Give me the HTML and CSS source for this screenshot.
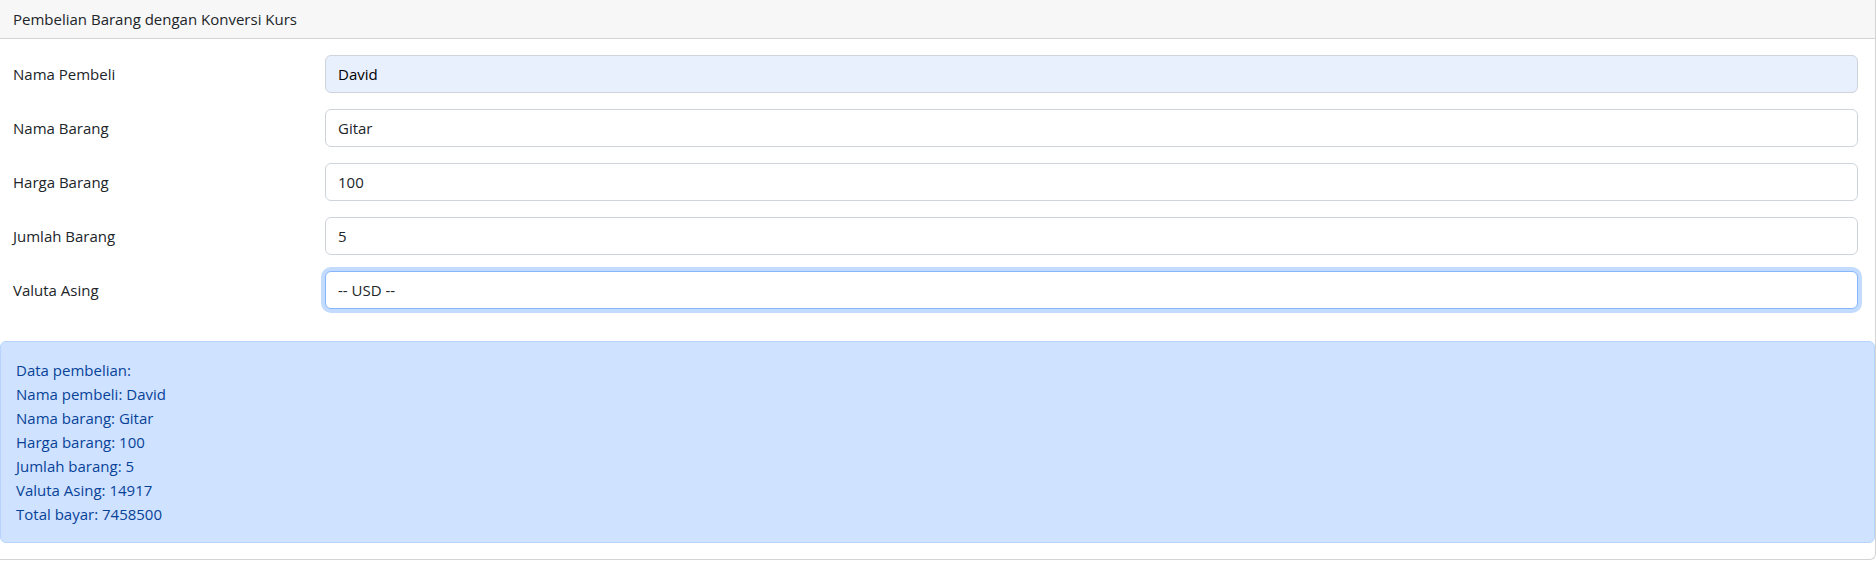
FILE: index.html
```html
<!DOCTYPE html>
<html lang="id">
<head>
<meta charset="utf-8">
<title>Pembelian Barang dengan Konversi Kurs</title>
<link rel="stylesheet" href="styles.css">
</head>
<body>
<div class="card">
  <div class="card-header">Pembelian Barang dengan Konversi Kurs</div>
  <form class="card-body">
    <div class="row">
      <label class="col-label" for="nama">Nama Pembeli</label>
      <input class="form-control autofill" id="nama" type="text" value="David">
    </div>
    <div class="row">
      <label class="col-label" for="barang">Nama Barang</label>
      <input class="form-control" id="barang" type="text" value="Gitar">
    </div>
    <div class="row">
      <label class="col-label" for="harga">Harga Barang</label>
      <input class="form-control" id="harga" type="text" value="100">
    </div>
    <div class="row">
      <label class="col-label" for="jumlah">Jumlah Barang</label>
      <input class="form-control" id="jumlah" type="text" value="5">
    </div>
    <div class="row">
      <label class="col-label" for="valuta">Valuta Asing</label>
      <select class="form-control focused" id="valuta">
        <option>-- USD --</option>
      </select>
    </div>
  </form>
  <div class="alert">
    Data pembelian:<br>
    Nama pembeli: David<br>
    Nama barang: Gitar<br>
    Harga barang: 100<br>
    Jumlah barang: 5<br>
    Valuta Asing: 14917<br>
    Total bayar: 7458500
  </div>
</div>
</body>
</html>
```
FILE: styles.css
```css
html, body {
  margin: 0;
  padding: 0;
  background: #fff;
}
body {
  font-family: "Open Sans", "Noto Sans", sans-serif;
  font-size: 15px;
  line-height: 24px;
  color: #212529;
}
.card {
  border-right: 1px solid #d4d4d4;
  border-bottom: 1px solid #d4d4d4;
  border-bottom-right-radius: 6px;
  background: #fff;
}
.card-header {
  height: 24px;
  padding: 7px 13px;
  background: #f7f7f7;
  border-bottom: 1px solid #d4d4d4;
}
.card-body {
  display: flex;
  flex-direction: column;
  gap: 16px;
  padding: 16px 17px 32px 13px;
  margin: 0;
}
.row {
  display: grid;
  grid-template-columns: 312px 1fr;
  align-items: start;
}
.col-label {
  padding-top: 7px;
  padding-bottom: 7px;
}
.form-control {
  display: block;
  box-sizing: border-box;
  width: 100%;
  height: 38px;
  padding: 6px 12px;
  font: inherit;
  color: #212529;
  background: #fff;
  border: 1px solid #ced4da;
  border-radius: 6px;
  outline: none;
  appearance: none;
  -webkit-appearance: none;
  margin: 0;
}
.form-control.autofill {
  background: #e8f0fe;
  color: #000;
}
.form-control.focused {
  border-color: #86b7fe;
  box-shadow: 0 0 0 4px rgba(13, 110, 253, 0.25);
}
.alert {
  margin: 0 0 16px 0;
  padding: 16px 15px;
  background: #cfe2ff;
  border: 1px solid #b6d4fe;
  border-radius: 6px;
  color: #084298;
}
```
